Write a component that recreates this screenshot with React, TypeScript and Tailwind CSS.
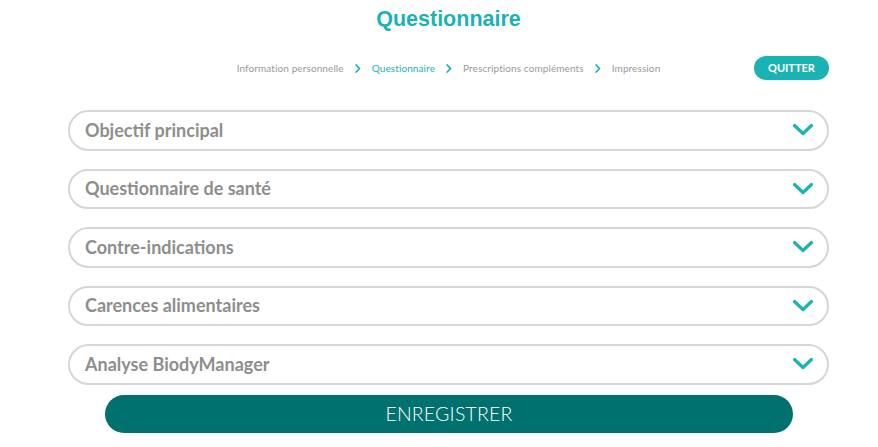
import React from 'react';

const sections = [
  'Objectif principal',
  'Questionnaire de santé',
  'Contre-indications',
  'Carences alimentaires',
  'Analyse BiodyManager',
];

const steps = ['Information personnelle', 'Questionnaire', 'Prescriptions compléments', 'Impression'];

const Chevron = () => (
  <svg width="22" height="14" viewBox="0 0 22 14" fill="none">
    <path d="M2.5 2.5 L11 10.5 L19.5 2.5" stroke="#1bb3b3" strokeWidth="3.2" strokeLinecap="round" strokeLinejoin="round" />
  </svg>
);

const StepArrow = () => (
  <svg width="6" height="9" viewBox="0 0 6 9" fill="none">
    <path d="M1.2 1 L4.5 4.5 L1.2 8" stroke="#1ab3b3" strokeWidth="1.8" strokeLinecap="round" strokeLinejoin="round" />
  </svg>
);

const App: React.FC = () => {
  return (
    <div className="w-[878px] h-[447px] bg-white overflow-hidden font-['Lato',sans-serif]">
      <div className="ml-[68px] w-[761px] flex flex-col">
        {/* title */}
        <h1 className="h-[38px] flex items-center justify-center text-[21.5px] font-bold text-[#1ab3b3] font-['Liberation_Sans',sans-serif]">
          Questionnaire
        </h1>

        {/* steps + quit */}
        <div className="mt-[18px] h-[24px] grid grid-cols-[1fr_auto_1fr] items-center">
          <div />
          <nav className="flex items-center gap-[11px] text-[10px] text-[#9a9a9a] tracking-[0.1px]">
            {steps.map((s, i) => (
              <React.Fragment key={s}>
                {i > 0 && <StepArrow />}
                <span className={i === 1 ? 'text-[#1ab3b3]' : ''}>{s}</span>
              </React.Fragment>
            ))}
          </nav>
          <div className="flex justify-end">
            <button className="w-[75px] h-[24px] rounded-full bg-[#1ab3b3] text-white text-[11px] font-bold">
              QUITTER
            </button>
          </div>
        </div>

        {/* accordion */}
        <div className="mt-[30px] flex flex-col gap-[18px]">
          {sections.map((s) => (
            <div
              key={s}
              className="h-[40.5px] rounded-full border-2 border-[#d6d6d6] flex items-center justify-between pl-[15px] pr-[13px]"
            >
              <span className="text-[18px] font-bold text-[#8e8e8e]">{s}</span>
              <Chevron />
            </div>
          ))}
        </div>
      </div>

      <div className="mt-[10px] flex justify-center pl-[20px]">
        <button className="w-[688px] h-[38px] rounded-full bg-[#00716f] text-white text-[19.5px] font-light tracking-[0.2px]">
          ENREGISTRER
        </button>
      </div>
    </div>
  );
};

export default App;
